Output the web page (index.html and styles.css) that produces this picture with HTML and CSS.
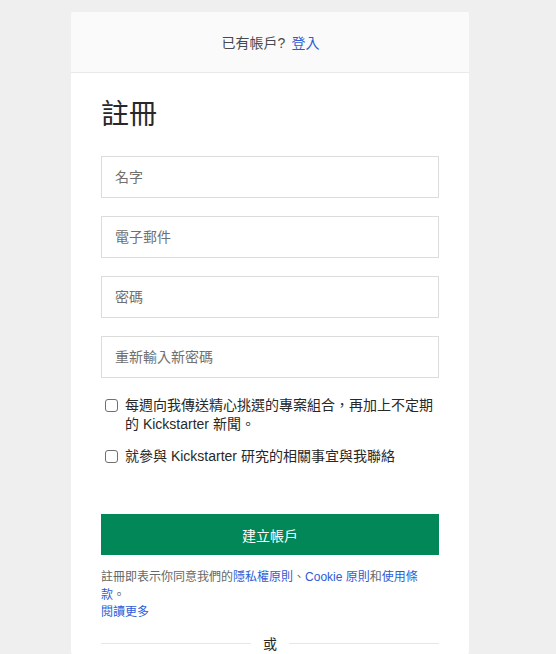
FILE: index.html
```html
<!DOCTYPE html>
<html lang="zh-Hant">
<head>
<meta charset="utf-8">
<link rel="stylesheet" href="styles.css">
</head>
<body>
<div class="card">
  <div class="card-head">已有帳戶? <a class="link" href="#">登入</a></div>
  <div class="card-body">
    <h1 class="title">註冊</h1>
    <div class="fields">
      <input class="field" type="text" placeholder="名字">
      <input class="field" type="text" placeholder="電子郵件">
      <input class="field" type="password" placeholder="密碼">
      <input class="field" type="password" placeholder="重新輸入新密碼">
    </div>
    <label class="check"><span class="box"></span><span>每週向我傳送精心挑選的專案組合，再加上不定期的 Kickstarter 新聞。</span></label>
    <label class="check"><span class="box"></span><span>就參與 Kickstarter 研究的相關事宜與我聯絡</span></label>
    <button class="submit" type="button">建立帳戶</button>
    <p class="terms">註冊即表示你同意我們的<a class="link" href="#">隱私權原則</a>、<a class="link" href="#">Cookie 原則</a>和<a class="link" href="#">使用條款</a>。<br><a class="link" href="#">閱讀更多</a></p>
    <div class="or"><span class="line"></span><span class="or-text">或</span><span class="line"></span></div>
  </div>
</div>
</body>
</html>
```
FILE: styles.css
```css
html, body { margin: 0; padding: 0; }
body {
  background: #efefef;
  font-family: "Liberation Sans", "Noto Sans CJK TC", sans-serif;
  color: #282828;
  padding-top: 12px;
  padding-left: 71px;
  height: 654px;
  box-sizing: border-box;
  overflow: hidden;
}
.card {
  width: 398px;
  height: 642px;
  background: #fff;
  border-radius: 2px;
  overflow: hidden;
}
.card-head {
  height: 61px;
  background: #fafafa;
  border-bottom: 1px solid #e9e9e9;
  display: flex;
  align-items: center;
  justify-content: center;
  font-size: 14px;
  color: #464a4e;
  box-sizing: border-box;
  padding-left: 1px;
}
.link { color: #2e5bd6; text-decoration: none; }
.card-head .link { margin-left: 6px; }
.card-body { padding: 22px 30px 0; }
.title {
  margin: 0 0 21px;
  font-size: 28px;
  font-weight: 400;
  line-height: 40px;
  color: #282828;
}
.fields { display: flex; flex-direction: column; gap: 18px; margin-bottom: 18px; }
.field {
  height: 42px;
  border: 1px solid #dcdcdc;
  border-radius: 0;
  padding: 0 13px;
  font-family: inherit;
  font-size: 14px;
  box-sizing: border-box;
  width: 100%;
  outline: none;
}
.field::placeholder { color: #707070; }
.check {
  display: flex;
  align-items: flex-start;
  gap: 6px;
  font-size: 14px;
  line-height: 19px;
  color: #282828;
  margin-left: 4px;
  margin-bottom: 13px;
}
.box {
  flex: none;
  width: 11px;
  height: 11px;
  border: 1px solid #707070;
  border-radius: 3px;
  margin-top: 3px;
  margin-right: 1px;
}
.submit {
  display: block;
  width: 100%;
  height: 41px;
  margin-top: 48px;
  background: #028858;
  color: #fff;
  border: 0;
  font-family: inherit;
  font-size: 14px;
  cursor: pointer;
}
.terms {
  margin: 14px 0 0;
  font-size: 12px;
  line-height: 17.5px;
  color: #656969;
}
.or {
  display: flex;
  align-items: center;
  margin-top: 12px;
}
.line { flex: 1; height: 1px; background: #e6e6e6; }
.or-text { padding: 0 12px; font-size: 14px; color: #282828; line-height: 20px; }
```
